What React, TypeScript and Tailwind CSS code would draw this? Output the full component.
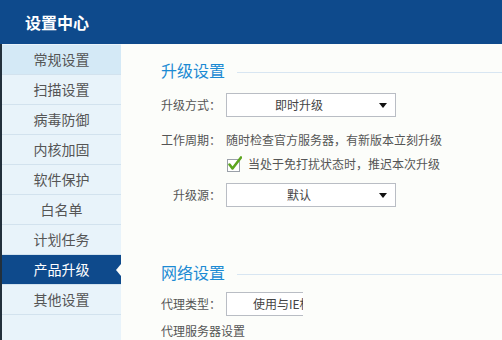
import React from 'react';

const menu = ['常规设置', '扫描设置', '病毒防御', '内核加固', '软件保护', '白名单', '计划任务', '产品升级', '其他设置'];

const font = { fontFamily: '"Noto Sans CJK SC", "Noto Sans", sans-serif' };

const Arrow = () => (
  <span className="absolute right-[8px] top-1/2 -mt-[2px] h-0 w-0 border-x-[4px] border-t-[5px] border-x-transparent border-t-[#111]" />
);

const Select: React.FC<{ value: string }> = ({ value }) => (
  <div className="relative flex h-[24px] w-[170px] items-center border border-[#b9bdc4] bg-white pr-[24px] text-[12px] text-[#444]">
    <span className="flex-1 text-center">{value}</span>
    <Arrow />
  </div>
);

const Label: React.FC<{ text: string }> = ({ text }) => (
  <span className="w-[60px] shrink-0 text-right text-[12px] text-[#555]">{text}</span>
);

const Title: React.FC<{ text: string }> = ({ text }) => (
  <div className="flex h-[22px] items-center">
    <span className="text-[16px] leading-[22px] text-[#1b8ad3]">{text}</span>
    <span className="ml-[12px] mt-[4px] h-px flex-1 bg-[#d8e6f2]" />
  </div>
);

export default function App() {
  return (
    <div className="h-[340px] w-[502px] overflow-hidden bg-[#fcfdfa]" style={font}>
      {/* Header */}
      <div className="flex h-[44px] items-center bg-[#0e4a8c] pl-[25px] text-[16px] font-bold text-white">设置中心</div>
      <div className="flex h-[296px]">
        {/* Sidebar */}
        <div className="w-[121px] shrink-0 border-l-2 border-[#22303c] bg-[#e8f3fa] pt-px">
          {menu.map((m, i) => {
            const active = m === '产品升级';
            return (
              <div
                key={m}
                className={`relative flex h-[30px] items-center justify-center border-b border-[#d2e2ee] text-[14px] ${
                  active ? 'bg-[#0e4a8c] text-white' : i === 0 ? 'bg-[#d4e9f6] text-[#555]' : 'text-[#555]'
                }`}
              >
                {m}
                {active && (
                  <span className="absolute right-0 top-1/2 -mt-[6px] h-0 w-0 border-y-[6px] border-r-[5px] border-y-transparent border-r-[#fcfdfa]" />
                )}
              </div>
            );
          })}
        </div>

        {/* Content */}
        <div className="flex-1 pl-[40px] pt-[15px]">
          <Title text="升级设置" />
          <div className="mt-[12px] flex items-center gap-[5px]">
            <Label text="升级方式：" />
            <Select value="即时升级" />
          </div>
          <div className="mt-[14px] flex h-[18px] items-center gap-[5px] text-[12px] text-[#555]">
            <Label text="工作周期：" />
            <span>随时检查官方服务器，有新版本立刻升级</span>
          </div>
          <div className="mt-[6px] flex h-[18px] items-center pl-[66px] text-[12px] text-[#555]">
            <svg width="15" height="16" viewBox="0 0 15 16" className="mr-[6px]">
              <rect x="0.5" y="3.5" width="12" height="12" fill="#fff" stroke="#9aa0a8" />
              <path d="M2.5 8.5 L5.5 12.5 L14 1.5" fill="none" stroke="#5ca51f" strokeWidth="2.6" strokeLinecap="round" strokeLinejoin="round" />
            </svg>
            <span>当处于免打扰状态时，推迟本次升级</span>
          </div>
          <div className="mt-[10px] flex items-center gap-[5px]">
            <Label text="升级源：" />
            <Select value="默认" />
          </div>

          <div className="mt-[54px]">
            <Title text="网络设置" />
          </div>
          <div className="mt-[9px] flex items-center gap-[5px]">
            <Label text="代理类型：" />
            <div className="w-[77px] overflow-hidden">
              <div className="h-[24px] w-[170px] whitespace-nowrap border border-[#b9bdc4] bg-white pl-[26px] text-[12px] leading-[22px] text-[#444]">
                使用与IE相同设置
              </div>
            </div>
          </div>
          <div className="mt-[6px] flex h-[18px] items-center text-[12px] text-[#555]">代理服务器设置</div>
        </div>
      </div>
    </div>
  );
}
